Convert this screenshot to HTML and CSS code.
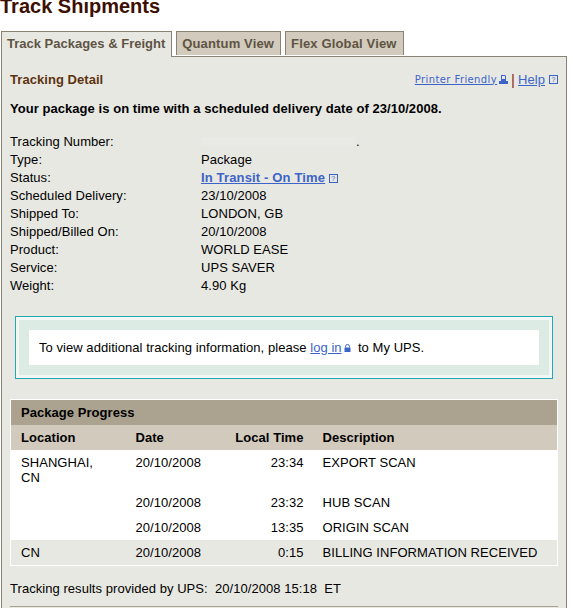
FILE: index.html
```html
<!DOCTYPE html>
<html lang="en">
<head>
    <meta charset="UTF-8">
    <meta name="viewport" content="width=device-width, initial-scale=1.0">
    <title>Track Shipments</title>
    <link rel="stylesheet" href="styles.css">
</head>
<body>

<h1 class="page-title">Track Shipments</h1>

<div class="tabs">
    <div class="tab active">Track Packages &amp; Freight</div>
    <div class="tab">Quantum View</div>
    <div class="tab">Flex Global View</div>
</div>

<div class="panel">
    <div class="panel-head">
        <h2 class="section-title">Tracking Detail</h2>
        <div class="tools">
            <a class="printer-link" href="#">Printer Friendly</a>
            <svg class="printer-icon" width="9" height="9" viewBox="0 0 9 9"><path d="M2 0h4l1 1v5h2v3H0V6h2z" fill="#3c64c8"/><path d="M3 1h3v3H3z" fill="#e8e8e3"/></svg>
            <span class="divider">|</span>
            <a class="help-link" href="#">Help</a>
            <span class="help-icon">?</span>
        </div>
    </div>

    <p class="on-time">Your package is on time with a scheduled delivery date of 23/10/2008.</p>

    <div class="details">
        <div>Tracking Number:</div><div><span class="masked"></span>.</div>
        <div>Type:</div><div>Package</div>
        <div>Status:</div><div><a class="status-link" href="#">In Transit - On Time</a> <span class="help-icon">?</span></div>
        <div>Scheduled Delivery:</div><div>23/10/2008</div>
        <div>Shipped To:</div><div>LONDON, GB</div>
        <div>Shipped/Billed On:</div><div>20/10/2008</div>
        <div>Product:</div><div>WORLD EASE</div>
        <div>Service:</div><div>UPS SAVER</div>
        <div>Weight:</div><div>4.90 Kg</div>
    </div>

    <div class="notice">
        <div class="notice-band">
            <div class="notice-text">
                To view additional tracking information, please <a href="#">log in</a>
                <svg class="lock-icon" width="7" height="8" viewBox="0 0 7 8"><path d="M1.5 3.5V2.5a2 2 0 0 1 4 0v1" fill="none" stroke="#3c64c8"/><path d="M0.5 3.5h6V8h-6z" fill="#3c64c8"/></svg>
                to My UPS.
            </div>
        </div>
    </div>

    <table class="progress">
        <colgroup>
            <col class="col-location">
            <col class="col-date">
            <col class="col-time">
            <col>
        </colgroup>
        <tr class="progress-title"><th colspan="4">Package Progress</th></tr>
        <tr class="progress-cols">
            <th>Location</th>
            <th>Date</th>
            <th class="time-cell">Local Time</th>
            <th class="desc-cell">Description</th>
        </tr>
        <tr class="tall">
            <td>SHANGHAI,<br>CN</td>
            <td>20/10/2008</td>
            <td class="time-cell">23:34</td>
            <td class="desc-cell">EXPORT SCAN</td>
        </tr>
        <tr>
            <td></td>
            <td>20/10/2008</td>
            <td class="time-cell">23:32</td>
            <td class="desc-cell">HUB SCAN</td>
        </tr>
        <tr>
            <td></td>
            <td>20/10/2008</td>
            <td class="time-cell">13:35</td>
            <td class="desc-cell">ORIGIN SCAN</td>
        </tr>
        <tr class="shaded">
            <td>CN</td>
            <td>20/10/2008</td>
            <td class="time-cell">0:15</td>
            <td class="desc-cell">BILLING INFORMATION RECEIVED</td>
        </tr>
    </table>

    <p class="provided">Tracking results provided by UPS:&nbsp; 20/10/2008 15:18&nbsp; ET</p>
    <div class="rule"></div>
</div>

</body>
</html>
```

FILE: styles.css
```css
body, html {
    margin: 0;
    padding: 0;
    font-family: "Liberation Sans", Arial, sans-serif;
    font-size: 13px;
    letter-spacing: 0.05px;
    color: #000;
    background: #fff;
}

a {
    color: #3c64c8;
}

.page-title {
    margin: 0 0 19px 0;
    font-size: 20px;
    line-height: 12px;
    letter-spacing: 0;
    color: #3d0f00;
}

/* Tabs */
.tabs {
    display: flex;
    gap: 4px;
    margin-left: 1px;
}

.tab {
    height: 23px;
    line-height: 23px;
    padding: 0 6px 0 5px;
    border: 1px solid #8a8272;
    border-bottom: none;
    background: #d2cabc;
    color: #5e5443;
    font-weight: bold;
    letter-spacing: 0.15px;
}

.tab.active {
    height: 25px;
    margin-bottom: -1px;
    background: #e8e8e3;
    position: relative;
    letter-spacing: 0;
}

/* Main panel */
.panel {
    width: 564px;
    height: 560px;
    margin-left: 1px;
    border: 1px solid #8a8272;
    border-bottom: none;
    background: #e8e8e3;
}

.panel-head {
    display: flex;
    justify-content: space-between;
    align-items: center;
    padding: 14px 8px 0 8px;
    height: 16px;
}

.section-title {
    margin: 0;
    font-size: 13px;
    color: #5c3310;
}

.tools {
    display: flex;
    align-items: center;
}

.printer-link {
    font-family: "DejaVu Sans", sans-serif;
    font-size: 10px;
    letter-spacing: 0.4px;
}

.printer-icon {
    margin-left: 2px;
}

.divider {
    margin: 0 3px;
    font-size: 15px;
    color: #8a2a10;
}

.help-link {
    margin-right: 4px;
}

.help-icon {
    display: inline-block;
    width: 7px;
    height: 7px;
    border: 1px solid #3c64c8;
    font-size: 7px;
    line-height: 7px;
    text-align: center;
    color: #3c64c8;
    vertical-align: 1px;
}

.on-time {
    margin: 14px 8px 0 8px;
    font-weight: bold;
    line-height: 16px;
}

.details {
    display: grid;
    grid-template-columns: 191px 1fr;
    margin: 16px 8px 0 8px;
    line-height: 18px;
}

.masked {
    display: inline-block;
    width: 155px;
    height: 9px;
    background: #e9e9e5;
}

.status-link {
    font-weight: bold;
    letter-spacing: 0.15px;
}

/* Login notice */
.notice {
    margin: 21px 13px 0 13px;
    padding: 3px;
    border: 1px solid #20a8b0;
    background: #f2f6f4;
}

.notice-band {
    padding: 10px;
    background: #dcebe4;
}

.notice-text {
    height: 35px;
    line-height: 35px;
    padding-left: 10px;
    background: #fff;
}

.lock-icon {
    margin: 0 3px 0 -1px;
}

/* Progress table */
.progress {
    width: 548px;
    margin: 20px 0 0 8px;
    border-collapse: collapse;
    border: 1px solid #fff;
    table-layout: fixed;
    background: #fff;
}

.col-location {
    width: 115px;
}

.col-date {
    width: 100px;
}

.col-time {
    width: 78px;
}

.progress th, .progress td {
    padding: 0 0 0 10px;
    text-align: left;
}

.progress th {
    height: 25px;
}

.progress td {
    height: 25px;
    vertical-align: top;
    padding-top: 5px;
    box-sizing: border-box;
    line-height: 15px;
}

.progress-title th {
    background: #aca290;
}

.progress-cols th {
    background: #d2cabc;
}

.progress .time-cell {
    text-align: right;
    padding-left: 0;
}

.progress .desc-cell {
    padding-left: 19px;
}

.tall td {
    height: 40px;
}

.shaded td {
    background: #e8e8e3;
}

.provided {
    margin: 15px 8px 0 8px;
    line-height: 16px;
}

.rule {
    height: 1px;
    margin: 9px 8px 0 8px;
    background: #aca290;
}
```
